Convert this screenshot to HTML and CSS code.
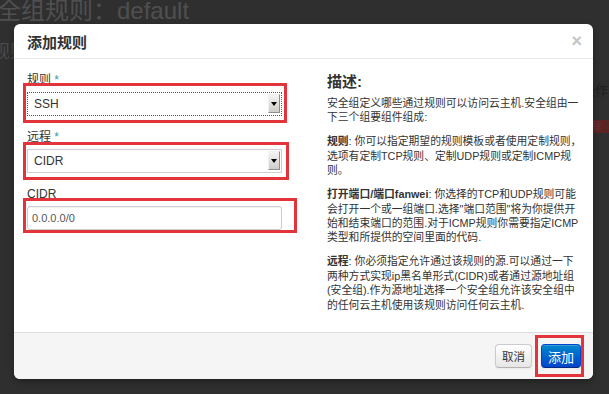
FILE: index.html
```html
<!DOCTYPE html>
<html lang="zh-CN">
<head>
    <meta charset="UTF-8">
    <title>添加规则</title>
    <link rel="stylesheet" href="styles.css">
</head>
<body>
    <div class="page">
        <h2 class="page-title">安全组规则：default</h2>
        <div class="page-head">
            <h3 class="section-title">规则</h3>
            <div class="actions">
                <span class="actions-label">操作</span>
                <span class="btn-delete">删除</span>
            </div>
        </div>
    </div>

    <div class="modal">
        <div class="modal-header">
            <h3>添加规则</h3>
            <span class="close">&times;</span>
        </div>
        <div class="modal-body">
            <div class="form-col">
                <div class="field">
                    <label>规则 <span class="req">*</span></label>
                    <div class="select-box focus">
                        <select>
                            <option>SSH</option>
                        </select>
                    </div>
                </div>
                <div class="field">
                    <label>远程 <span class="req">*</span></label>
                    <div class="select-box">
                        <select>
                            <option>CIDR</option>
                        </select>
                    </div>
                </div>
                <div class="field">
                    <label>CIDR</label>
                    <input type="text" value="0.0.0.0/0">
                </div>
            </div>
            <div class="help-col">
                <h3>描述:</h3>
                <p>安全组定义哪些通过规则可以访问云主机.安全组由一<br>下三个组要组件组成:</p>
                <p><b>规则</b>: 你可以指定期望的规则模板或者使用定制规则，<br>选项有定制TCP规则、定制UDP规则或定制ICMP规<br>则。</p>
                <p><b>打开端口/端口fanwei</b>: 你选择的TCP和UDP规则可能<br>会打开一个或一组端口.选择"端口范围"将为你提供开<br>始和结束端口的范围.对于ICMP规则你需要指定ICMP<br>类型和所提供的空间里面的代码.</p>
                <p><b>远程</b>: 你必须指定允许通过该规则的源.可以通过一下<br>两种方式实现ip黑名单形式(CIDR)或者通过源地址组<br>(安全组).作为源地址选择一个安全组允许该安全组中<br>的任何云主机使用该规则访问任何云主机.</p>
            </div>
        </div>
        <div class="modal-footer">
            <button class="btn">取消</button>
            <button class="btn btn-primary">添加</button>
        </div>

        <div class="mark mark-rule"></div>
        <div class="mark mark-remote"></div>
        <div class="mark mark-cidr"></div>
        <div class="mark mark-submit"></div>
    </div>
</body>
</html>
```

FILE: styles.css
```css
body {
    margin: 0;
    background: #2f2f2f;
    font-family: "Liberation Sans", "Noto Sans CJK SC", sans-serif;
    overflow: hidden;
}

.page {
    height: 394px;
}

.page-title {
    margin: -2px 0 0 -27px;
    font-size: 24px;
    line-height: 26px;
    font-weight: normal;
    color: #4f4f4f;
    white-space: nowrap;
}

.page-head {
    display: flex;
    justify-content: space-between;
    margin-top: 18px;
}

.section-title {
    margin: 0 0 0 -8px;
    font-size: 18px;
    line-height: 20px;
    font-weight: normal;
    color: #4a4a4a;
}

.actions {
    width: 27px;
    margin-top: 42px;
    display: flex;
    flex-direction: column;
    align-items: flex-start;
}

.actions-label {
    font-size: 13px;
    line-height: 14px;
    color: #1f1f1f;
    white-space: nowrap;
}

.btn-delete {
    margin-top: 22px;
    width: 40px;
    height: 13px;
    background: #5c2323;
    color: #6e3030;
    font-size: 10px;
    line-height: 13px;
    overflow: hidden;
}

.modal {
    position: absolute;
    left: 14px;
    top: 24px;
    width: 579px;
    background: #fff;
    border-radius: 6px;
    box-shadow: 0 3px 7px rgba(0, 0, 0, 0.3);
    color: #333;
}

.modal-header {
    height: 34px;
    padding: 0 11px 0 13px;
    display: flex;
    align-items: center;
    justify-content: space-between;
    border-bottom: 1px solid #e8e8e8;
}

.modal-header h3 {
    margin: 0;
    font-size: 15px;
    font-weight: bold;
    color: #333;
}

.close {
    font-size: 18px;
    font-weight: bold;
    line-height: 18px;
    color: #c4c4c4;
}

.modal-body {
    display: flex;
    gap: 45px;
    padding: 14px 12px 20px 13px;
}

.form-col {
    width: 255px;
    flex-shrink: 0;
    display: flex;
    flex-direction: column;
    gap: 14px;
}

.field label {
    display: block;
    font-size: 12px;
    line-height: 14px;
    margin-bottom: 5px;
    color: #333;
}

.req {
    color: #3a9ab0;
}

.select-box {
    position: relative;
}

.select-box select {
    display: block;
    width: 100%;
    height: 24px;
    -webkit-appearance: none;
    appearance: none;
    border: 1px solid #cfcfcf;
    border-radius: 0;
    background: #fff;
    padding: 0 0 0 6px;
    font: 12px "Liberation Sans", sans-serif;
    color: #333;
}

.select-box.focus select {
    border: 1px dotted #555;
}

.select-box::after {
    content: '';
    position: absolute;
    right: 2px;
    top: 2px;
    width: 12px;
    height: 19px;
    box-sizing: border-box;
    background: linear-gradient(#f4f4f2, #cfcdc8);
    border: 1px solid #8e8e8e;
    border-top-color: #f0f0f0;
    border-left-color: #f0f0f0;
}

.select-box::before {
    content: '';
    position: absolute;
    right: 5px;
    top: 10px;
    border-left: 3px solid transparent;
    border-right: 3px solid transparent;
    border-top: 4px solid #000;
    z-index: 1;
}

.field input {
    display: block;
    width: 100%;
    height: 24px;
    box-sizing: border-box;
    border: 1px solid #ccc;
    border-radius: 3px;
    box-shadow: inset 0 1px 1px rgba(0, 0, 0, 0.06);
    padding: 0 4px;
    font: 11px "Liberation Sans", sans-serif;
    color: #555;
}

.help-col {
    flex: 1;
    min-width: 0;
}

.help-col h3 {
    margin: 0 0 5px 0;
    font-size: 15px;
    line-height: 18px;
    font-weight: bold;
    color: #333;
}

.help-col p {
    margin: 0 0 9.6px 0;
    font-size: 10.8px;
    line-height: 14.4px;
    color: #333;
    white-space: nowrap;
}

.help-col p:last-child {
    margin-bottom: 0;
}

.modal-footer {
    display: flex;
    justify-content: flex-end;
    gap: 9px;
    padding: 11px 12px;
    background: #f5f5f5;
    border-top: 1px solid #ddd;
    border-radius: 0 0 6px 6px;
}

.btn {
    height: 24px;
    padding: 0 6px;
    font: 11.5px "Liberation Sans", "Noto Sans CJK SC", sans-serif;
    color: #333;
    background: linear-gradient(#ffffff, #e6e6e6);
    border: 1px solid #cccccc;
    border-bottom-color: #b3b3b3;
    border-radius: 4px;
    box-shadow: inset 0 1px 0 rgba(255, 255, 255, 0.2), 0 1px 2px rgba(0, 0, 0, 0.05);
}

.btn-primary {
    font-size: 13px;
    color: #fff;
    background: linear-gradient(#0088cc, #0044cc);
    border-color: #0044cc #0044cc #002a80;
}

.mark {
    position: absolute;
    box-sizing: border-box;
    border: 3px solid #e3343b;
    pointer-events: none;
}

.mark-rule {
    left: 9px;
    top: 59px;
    width: 264px;
    height: 40px;
}

.mark-remote {
    left: 9px;
    top: 118px;
    width: 266px;
    height: 38px;
}

.mark-cidr {
    left: 9px;
    top: 174px;
    width: 274px;
    height: 35px;
}

.mark-submit {
    left: 521px;
    top: 311px;
    width: 49px;
    height: 42px;
}
```
